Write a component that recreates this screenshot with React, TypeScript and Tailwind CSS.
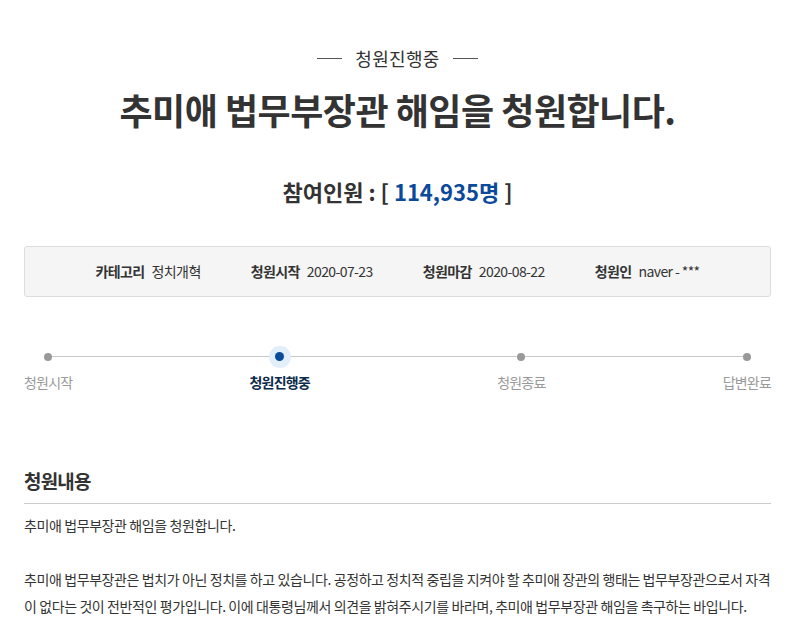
import React from 'react';

const font = { fontFamily: '"Noto Sans CJK KR", "Noto Sans", sans-serif' };

const steps = [
  { label: '청원시작', active: false, extra: '' },
  { label: '청원진행중', active: true, extra: 'mr-[10px]' },
  { label: '청원종료', active: false, extra: '' },
  { label: '답변완료', active: false, extra: '' },
];

const App = () => {
  return (
    <div className="min-h-screen bg-white text-[#333]" style={font}>
      <main className="pl-[24px] pr-[30px] pt-[44px]">
        <div className="flex items-center justify-center gap-[13px]">
          <span className="w-[25px] h-px bg-[#555]" />
          <span className="text-[18px] leading-[28px] tracking-[0.3px]">청원진행중</span>
          <span className="w-[25px] h-px bg-[#555]" />
        </div>

        <h1 className="mt-[13px] text-center text-[36px] leading-[48px] font-bold tracking-[-0.5px]">
          추미애 법무부장관 해임을 청원합니다.
        </h1>

        <p className="mt-[42px] text-center text-[22px] leading-[32px] font-bold">
          참여인원 : [ <span className="text-[#0b4a9a]">114,935명</span> ]
        </p>

        <div className="mt-[39px] h-[51px] flex items-center justify-center gap-[50px] bg-[#f5f5f5] border border-[#ddd] rounded-[3px] text-[14px] tracking-[-0.6px]">
          <div className="flex gap-[7px]"><b>카테고리</b><span>정치개혁</span></div>
          <div className="flex gap-[7px]"><b>청원시작</b><span>2020-07-23</span></div>
          <div className="flex gap-[7px]"><b>청원마감</b><span>2020-08-22</span></div>
          <div className="flex gap-[7px]"><b>청원인</b><span>naver - ***</span></div>
        </div>

        <div className="relative mt-[47px]">
          <div className="absolute left-[24px] right-[24px] top-[12px] h-px bg-[#c8c8c8]" />
          <div className="relative flex justify-between">
            {steps.map((s) => (
              <div key={s.label} className={'flex flex-col items-center ' + s.extra}>
                <div className="h-[25px] w-[25px] flex items-center justify-center">
                  {s.active ? (
                    <div className="h-[22px] w-[22px] rounded-full bg-[#e3eefb] flex items-center justify-center">
                      <div className="h-[9px] w-[9px] rounded-full bg-[#0b4a9a]" />
                    </div>
                  ) : (
                    <div className="h-[8px] w-[8px] rounded-full bg-[#999]" />
                  )}
                </div>
                <span
                  className={
                    s.active
                      ? 'mt-[3px] text-[14px] leading-[20px] font-bold text-[#0b2a4a] tracking-[-0.8px]'
                      : 'mt-[3px] text-[14px] leading-[20px] text-[#999] tracking-[-0.8px]'
                  }
                >
                  {s.label}
                </span>
              </div>
            ))}
          </div>
        </div>

        <section className="mt-[75px]">
          <h3 className="text-[19px] leading-[28px] font-bold tracking-[-0.8px] pb-[8px] border-b border-[#ccc]">
            청원내용
          </h3>
          <div className="mt-[8px] text-[14px] leading-[27px] tracking-[-0.4px]">
            <p>추미애 법무부장관 해임을 청원합니다.</p>
            <p className="mt-[27px]">
              추미애 법무부장관은 법치가 아닌 정치를 하고 있습니다. 공정하고 정치적 중립을 지켜야 할 추미애 장관의 행태는 법무부장관으로서 자격이 없다는 것이 전반적인 평가입니다. 이에 대통령님께서 의견을 밝혀주시기를 바라며, 추미애 법무부장관 해임을 촉구하는 바입니다.
            </p>
          </div>
        </section>
      </main>
    </div>
  );
};

export default App;
